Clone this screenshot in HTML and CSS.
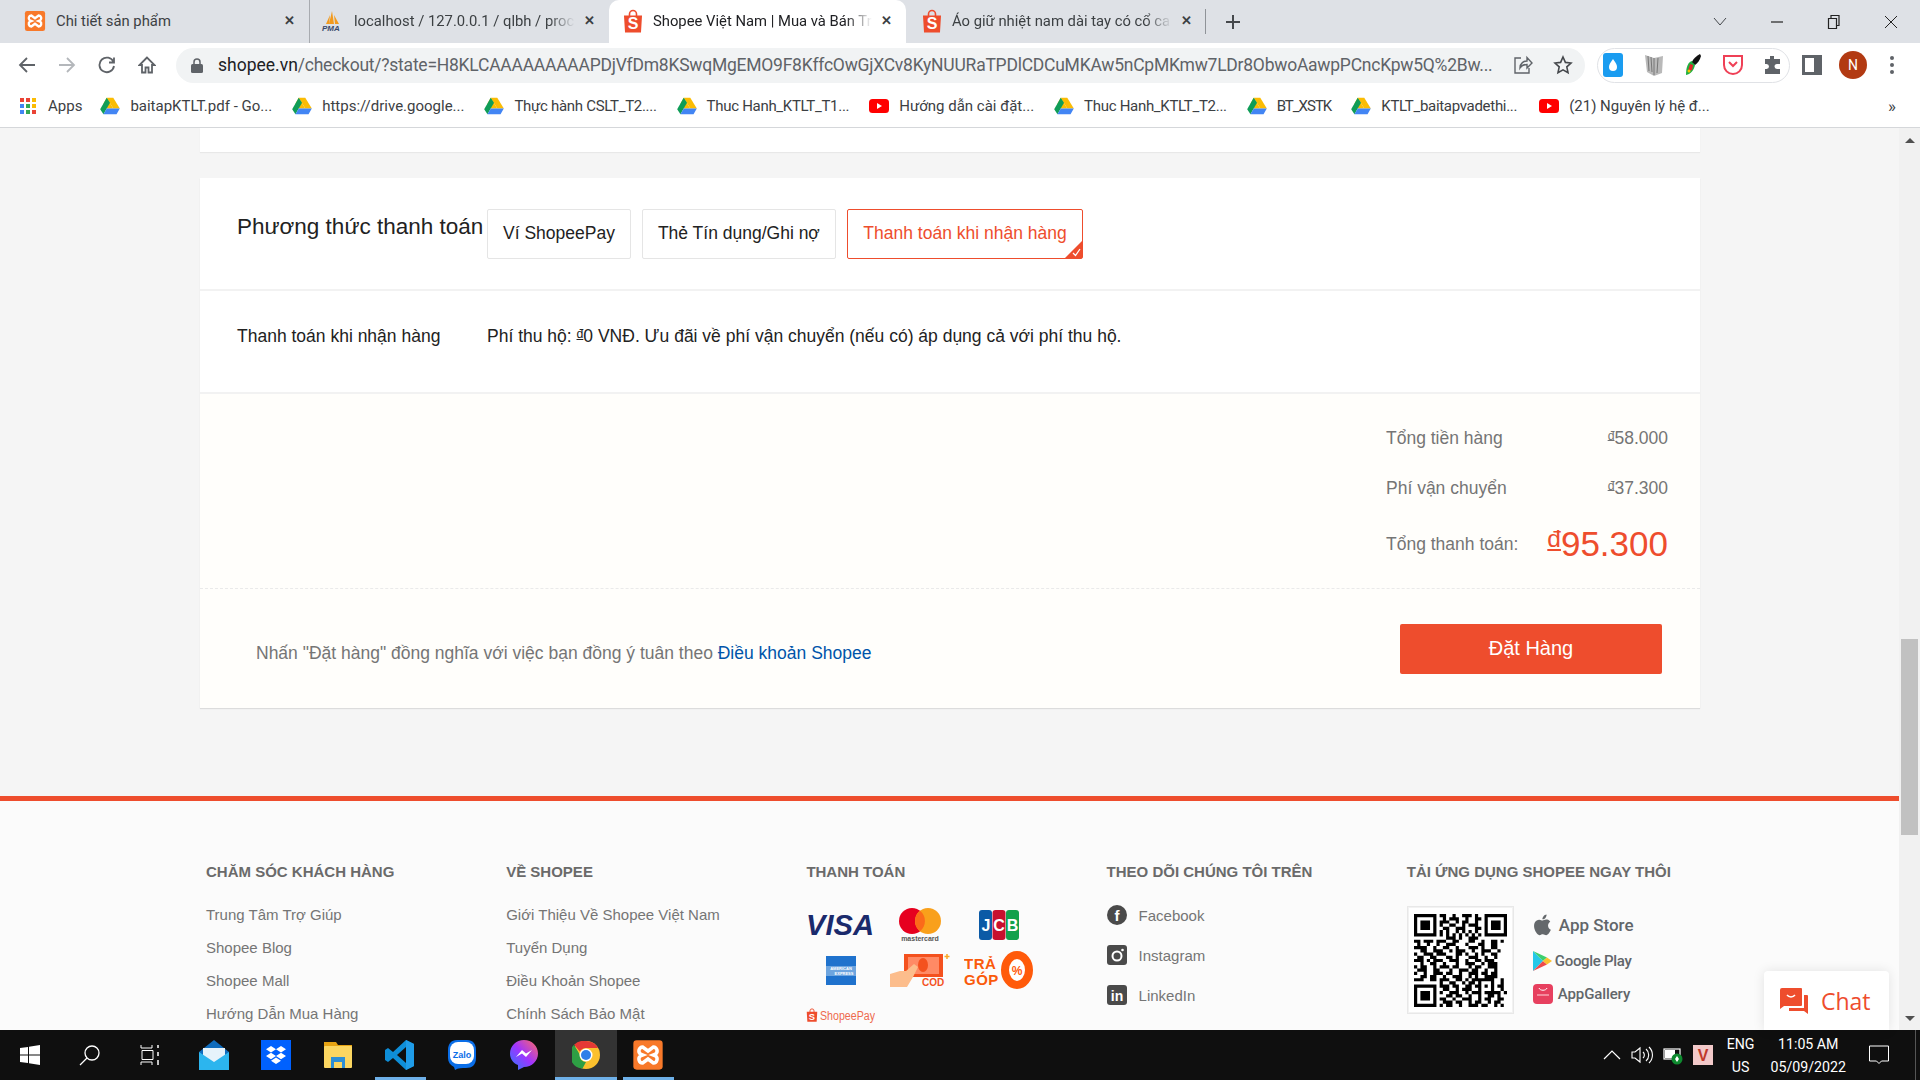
FILE: index.html
```html
<!DOCTYPE html>
<html lang="vi">
<head>
    <meta charset="UTF-8">
    <title>Shopee Việt Nam | Mua và Bán Trên Ứng Dụng</title>
    <link rel="stylesheet" href="styles.css">
</head>
<body>
    <!-- Shared icons -->
    <svg class="defs" width="0" height="0">
        <symbol id="i-drive" viewBox="0 0 24 22">
            <path d="M8 1h8l8 13h-8z" fill="#fbbc04"/>
            <path d="M8 1l8 13H8.2L4 7.8z" fill="#fbbc04"/>
            <path d="M8 1L0 15l4 6 8-14z" fill="#0f9d58"/>
            <path d="M4 21l4-7h16l-4 7z" fill="#4285f4"/>
        </symbol>
        <symbol id="i-yt" viewBox="0 0 20 14">
            <rect width="20" height="14" rx="3.5" fill="#f00"/>
            <path d="M8 4l5 3-5 3z" fill="#fff"/>
        </symbol>
        <symbol id="i-bag" viewBox="0 0 20 24">
            <path d="M6.5 7V5a3.5 3.5 0 0 1 7 0v2" fill="none" stroke="#ee4d2d" stroke-width="1.6"/>
            <path d="M1 6.5h18l-1 17H2z" fill="#ee4d2d"/>
            <text x="10" y="20" text-anchor="middle" class="bag-s">S</text>
        </symbol>
        <symbol id="i-xampp" viewBox="0 0 24 24">
            <rect x="1" y="1" width="22" height="22" rx="2.5" fill="#f8792a"/>
            <path d="M8 6a3 3 0 0 0-1.6 5.4L8 12l-1.6.6A3 3 0 0 0 8 18l4-3 4 3a3 3 0 0 0 1.6-5.4L16 12l1.600-.6A3 3 0 0 0 16 6l-4 3z" fill="none" stroke="#fff" stroke-width="2.6"/>
        </symbol>
    </svg>

    <!-- Tab strip -->
    <div class="tabstrip">
        <div class="tab tab-first">
            <svg class="fav" width="22" height="22"><use href="#i-xampp"/></svg>
            <span class="tab-title">Chi tiết sản phẩm</span>
            <span class="tab-x">✕</span>
        </div>
        <div class="tab tab-sep">
            <svg class="fav" width="24" height="22" viewBox="0 0 24 22">
                <path d="M9 14L12 1l2 13zM6 14L10 5l-1 9zM15 14l-1-9 5 9z" fill="#f29a1e"/>
                <text x="2" y="21" class="pma">PMA</text>
            </svg>
            <span class="tab-title">localhost / 127.0.0.1 / qlbh / proc</span>
            <span class="tab-x">✕</span>
        </div>
        <div class="tab tab-active">
            <svg class="fav" width="20" height="24"><use href="#i-bag"/></svg>
            <span class="tab-title">Shopee Việt Nam | Mua và Bán Tr</span>
            <span class="tab-x">✕</span>
        </div>
        <div class="tab tab-sep-right">
            <svg class="fav" width="20" height="24"><use href="#i-bag"/></svg>
            <span class="tab-title">Áo giữ nhiệt nam dài tay có cổ ca</span>
            <span class="tab-x">✕</span>
        </div>
        <svg class="tab-plus" width="16" height="16" viewBox="0 0 16 16"><path d="M8 1v14M1 8h14" stroke="#45484c" stroke-width="2"/></svg>
        <div class="win-controls">
            <svg width="14" height="10" viewBox="0 0 14 10"><path d="M1 1l6 7 6-7" fill="none" stroke="#45484c"/></svg>
            <svg width="14" height="14" viewBox="0 0 14 14"><path d="M1 7h12" stroke="#222" stroke-width="1.2"/></svg>
            <svg width="14" height="16" viewBox="0 0 14 16"><path d="M1.5 4.5h8v10h-8zM4 4.500V1.500h8v10H9.500" fill="none" stroke="#222" stroke-width="1.2"/></svg>
            <svg width="14" height="14" viewBox="0 0 14 14"><path d="M1 1l12 12M13 1L1 13" stroke="#222"/></svg>
        </div>
    </div>

    <!-- Address bar -->
    <div class="toolbar">
        <div class="nav-btns">
            <svg width="18" height="18" viewBox="0 0 18 18"><path d="M17 9H2M9 2L2 9l7 7" fill="none" stroke="#5f6368" stroke-width="1.800"/></svg>
            <svg width="18" height="18" viewBox="0 0 18 18"><path d="M1 9h15M9 2l7 7-7 7" fill="none" stroke="#b4b7bb" stroke-width="1.800"/></svg>
            <svg width="18" height="18" viewBox="0 0 18 18"><path d="M15.500 6A7.300 7.300 0 1 0 16 10M16 1.500V6.500H11" fill="none" stroke="#5f6368" stroke-width="1.800"/></svg>
            <svg width="18" height="18" viewBox="0 0 18 18"><path d="M9 1.500L1.500 9H4v7.500h3.500v-5h3v5H14V9h2.500z" fill="none" stroke="#5f6368" stroke-width="1.800"/></svg>
        </div>
        <div class="omnibox">
            <svg class="lock" width="12" height="15" viewBox="0 0 12 15"><path d="M3 6V4a3 3 0 0 1 6 0v2" fill="none" stroke="#5f6368" stroke-width="1.500"/><rect y="6" width="12" height="9" rx="1.500" fill="#5f6368"/></svg>
            <span class="url"><b>shopee.vn</b>/checkout/?state=H8KLCAAAAAAAAAPDjVfDm8KSwqMgEMO9F8KffcOwGjXCv8KyNUURaTPDlCDCuMKAw5nCpMKmw7LDr8ObwoAawpPCncKpw5Q%2Bw...</span>
            <svg width="20" height="20" viewBox="0 0 20 20"><path d="M8 3H2v15h14v-5M7 13c0-5 4-7 7-7V2.500L19 8l-5 5V9.500c-3 0-5.500 1-7 3.500z" fill="none" stroke="#5f6368" stroke-width="1.400"/></svg>
            <svg width="20" height="20" viewBox="0 0 20 20"><path d="M10 2l2.400 5.400 5.600.6-4.200 3.900 1.200 5.800L10 14.800 5 17.700l1.200-5.800L2 8l5.600-.6z" fill="none" stroke="#45484c" stroke-width="1.600"/></svg>
        </div>
        <div class="ext-pill">
            <svg width="20" height="24" viewBox="0 0 20 24"><rect width="20" height="24" rx="3" fill="#1a9cf0"/><path d="M10 6c3 4 4 6 4 8a4 4 0 0 1-8 0c0-2 1-4 4-8z" fill="#fff"/></svg>
            <svg width="22" height="24" viewBox="0 0 22 24"><path d="M2 2l9 3 9-2-1 17-8 3-7-4z" fill="#b9b9b9"/><path d="M5 3l1 15M8 4l1 15M11 5v17M15 5l-1 15" stroke="#777"/></svg>
            <svg width="18" height="24" viewBox="0 0 18 24"><path d="M2 22c0-8 2-13 6-14l3 4c-1 5-4 9-9 10z" fill="#1fb141"/><path d="M8 9c1-3 4-6 8-8l1 2c-1 4-3 7-6 9z" fill="#111"/><path d="M6 11l3 1-1 5-4 1z" fill="#e6232a"/><circle cx="5" cy="18" r="1.500" fill="#f2c200"/></svg>
            <svg width="22" height="24" viewBox="0 0 22 24"><path d="M2 3h18v9a9 9 0 0 1-18 0z" fill="none" stroke="#ef4056" stroke-width="2"/><path d="M7 9l4 4 4-4" fill="none" stroke="#ef4056" stroke-width="2"/></svg>
            <svg width="20" height="20" viewBox="0 0 20 20"><path d="M7 1h4v3h6v5h-3a2.500 2.500 0 0 0 0 5h3v5H2v-5h1.500a2.500 2.500 0 0 0 0-5H2V4h5z" fill="#5f6368"/></svg>
        </div>
        <svg class="side-panel" width="20" height="20" viewBox="0 0 20 20"><rect x="1.500" y="1.500" width="17" height="17" fill="none" stroke="#5f6368" stroke-width="3"/><rect x="12" y="2" width="6" height="16" fill="#5f6368"/></svg>
        <span class="avatar">N</span>
        <svg class="dots" width="4" height="18" viewBox="0 0 4 18"><circle cx="2" cy="2" r="2" fill="#5f6368"/><circle cx="2" cy="9" r="2" fill="#5f6368"/><circle cx="2" cy="16" r="2" fill="#5f6368"/></svg>
    </div>

    <!-- Bookmarks -->
    <div class="bookmarks">
        <a class="bm bm-apps">
            <svg width="16" height="16" viewBox="0 0 16 16">
                <rect width="4" height="4" fill="#ea4335"/><rect x="6" width="4" height="4" fill="#ea4335"/><rect x="12" width="4" height="4" fill="#fbbc04"/>
                <rect y="6" width="4" height="4" fill="#4285f4"/><rect x="6" y="6" width="4" height="4" fill="#34a853"/><rect x="12" y="6" width="4" height="4" fill="#fbbc04"/>
                <rect y="12" width="4" height="4" fill="#4285f4"/><rect x="6" y="12" width="4" height="4" fill="#34a853"/><rect x="12" y="12" width="4" height="4" fill="#ea4335"/>
            </svg>Apps
        </a>
        <a class="bm"><svg width="20" height="18"><use href="#i-drive"/></svg>baitapKTLT.pdf - Go...</a>
        <a class="bm"><svg width="20" height="18"><use href="#i-drive"/></svg>https://drive.google...</a>
        <a class="bm bm-tight"><svg width="20" height="18"><use href="#i-drive"/></svg>Thực hành CSLT_T2....</a>
        <a class="bm bm-tight"><svg width="20" height="18"><use href="#i-drive"/></svg>Thuc Hanh_KTLT_T1...</a>
        <a class="bm"><svg width="20" height="14"><use href="#i-yt"/></svg>Hướng dẫn cài đặt...</a>
        <a class="bm bm-tight"><svg width="20" height="18"><use href="#i-drive"/></svg>Thuc Hanh_KTLT_T2...</a>
        <a class="bm bm-xstk"><svg width="20" height="18"><use href="#i-drive"/></svg>BT_XSTK</a>
        <a class="bm bm-tight bm-ktlt"><svg width="20" height="18"><use href="#i-drive"/></svg>KTLT_baitapvadethi...</a>
        <a class="bm"><svg width="20" height="14"><use href="#i-yt"/></svg>(21) Nguyên lý hệ đ...</a>
        <span class="bm-more">»</span>
    </div>

    <!-- Page -->
    <div class="viewport">
        <div class="page">
            <div class="card-stub"></div>

            <section class="checkout">
                <div class="pay-head">
                    <h2>Phương thức thanh toán</h2>
                    <div class="pay-options">
                        <button class="pay-option">Ví ShopeePay</button>
                        <button class="pay-option">Thẻ Tín dụng/Ghi nợ</button>
                        <button class="pay-option selected">Thanh toán khi nhận hàng
                            <svg class="tick" width="17" height="17" viewBox="0 0 17 17"><path d="M17 0v17H0z" fill="#ee4d2d"/><path d="M8 12l2.500 2.500L15 8" fill="none" stroke="#fff" stroke-width="1.300"/></svg>
                        </button>
                    </div>
                </div>
                <div class="pay-note">
                    <span class="pay-note-label">Thanh toán khi nhận hàng</span>
                    <span>Phí thu hộ: <span class="cur">đ</span>0 VNĐ. Ưu đãi về phí vận chuyển (nếu có) áp dụng cả với phí thu hộ.</span>
                </div>
                <div class="totals">
                    <div class="totals-grid">
                        <span>Tổng tiền hàng</span><span class="amount"><span class="cur">đ</span>58.000</span>
                        <span>Phí vận chuyển</span><span class="amount"><span class="cur">đ</span>37.300</span>
                        <span>Tổng thanh toán:</span><span class="amount grand"><span class="cur">đ</span>95.300</span>
                    </div>
                </div>
                <div class="place-order">
                    <p>Nhấn "Đặt hàng" đồng nghĩa với việc bạn đồng ý tuân theo <a>Điều khoản Shopee</a></p>
                    <button class="order-btn">Đặt Hàng</button>
                </div>
            </section>

            <footer class="site-footer">
                <div class="footer-col">
                    <h3>Chăm sóc khách hàng</h3>
                    <ul class="links">
                        <li>Trung Tâm Trợ Giúp</li>
                        <li>Shopee Blog</li>
                        <li>Shopee Mall</li>
                        <li>Hướng Dẫn Mua Hàng</li>
                    </ul>
                </div>
                <div class="footer-col">
                    <h3>Về Shopee</h3>
                    <ul class="links">
                        <li>Giới Thiệu Về Shopee Việt Nam</li>
                        <li>Tuyển Dụng</li>
                        <li>Điều Khoản Shopee</li>
                        <li>Chính Sách Bảo Mật</li>
                    </ul>
                </div>
                <div class="footer-col">
                    <h3>Thanh toán</h3>
                    <div class="pay-logos">
                        <svg width="69" height="24" viewBox="0 0 69 24"><text x="0" y="22" textLength="68" lengthAdjust="spacingAndGlyphs" class="visa">VISA</text></svg>
                        <svg width="44" height="34" viewBox="0 0 44 34">
                            <circle cx="14" cy="13" r="13" fill="#e6001f"/><circle cx="30" cy="13" r="13" fill="#f9a01b"/>
                            <path d="M22 2.800a13 13 0 0 1 0 20.400 13 13 0 0 1 0-20.400z" fill="#fb6a1a"/>
                            <text x="22" y="33" text-anchor="middle" class="mc">mastercard</text>
                        </svg>
                        <svg width="40" height="30" viewBox="0 0 40 30">
                            <rect width="13" height="30" rx="3" fill="#0b5aa6"/><rect x="13.500" width="13" height="30" rx="3" fill="#c8102e"/><rect x="27" width="13" height="30" rx="3" fill="#12a14b"/>
                            <text x="7" y="21" text-anchor="middle" class="jcb">J</text><text x="20" y="21" text-anchor="middle" class="jcb">C</text><text x="33.500" y="21" text-anchor="middle" class="jcb">B</text>
                        </svg>
                        <svg width="30" height="29" viewBox="0 0 30 29">
                            <rect width="30" height="29" fill="#1f72cd"/>
                            <rect x="0" y="10" width="30" height="10" fill="#6ea5df"/>
                            <text x="15" y="14" text-anchor="middle" class="amex">AMERICAN</text><text x="18" y="19" text-anchor="middle" class="amex">EXPRESS</text>
                        </svg>
                        <svg width="60" height="33" viewBox="0 0 60 33">
                            <rect x="14" width="39" height="23" fill="#f4511e"/>
                            <rect x="18" y="3" width="31" height="17" fill="#ff8a65"/>
                            <ellipse cx="33" cy="11" rx="5" ry="7" fill="#f4511e"/>
                            <path d="M0 20l10-3h6l8-7 4 3-5 10-6 10H0z" fill="#fcbd8c"/>
                            <text x="32" y="32" class="cod">COD</text>
                            <path d="M57 0v5M54.500 2.500h5" stroke="#f9a825" stroke-width="1.500"/>
                        </svg>
                        <svg width="70" height="38" viewBox="0 0 70 38">
                            <text x="0" y="18" class="tra">TRẢ</text><text x="0" y="34" class="tra">GÓP</text>
                            <ellipse cx="53" cy="19" rx="12" ry="15" fill="#fff" stroke="#ff5a0a" stroke-width="8"/>
                            <text x="53" y="24" text-anchor="middle" class="pct">%</text>
                        </svg>
                        <svg width="69" height="15" viewBox="0 0 69 15">
                            <use href="#i-bag" width="12" height="14"/>
                            <text x="14" y="12" textLength="55" lengthAdjust="spacingAndGlyphs" class="spay">ShopeePay</text>
                        </svg>
                    </div>
                </div>
                <div class="footer-col">
                    <h3>Theo dõi chúng tôi trên</h3>
                    <ul class="socials">
                        <li>
                            <svg width="20" height="20" viewBox="0 0 20 20"><circle cx="10" cy="10" r="10" fill="#4a4a4a"/><text x="10" y="16" text-anchor="middle" class="soc-f">f</text></svg>
                            Facebook
                        </li>
                        <li>
                            <svg width="20" height="20" viewBox="0 0 20 20"><rect width="20" height="20" rx="3" fill="#4a4a4a"/><circle cx="10" cy="11" r="4.500" fill="none" stroke="#fff" stroke-width="2"/><circle cx="15.500" cy="5" r="1.300" fill="#fff"/></svg>
                            Instagram
                        </li>
                        <li>
                            <svg width="20" height="20" viewBox="0 0 20 20"><rect width="20" height="20" rx="3" fill="#4a4a4a"/><text x="10" y="16" text-anchor="middle" class="soc-in">in</text></svg>
                            LinkedIn
                        </li>
                    </ul>
                </div>
                <div class="footer-col">
                    <h3>Tải ứng dụng Shopee ngay thôi</h3>
                    <div class="app-row">
                        <div class="qr">
                            <svg width="93" height="93" viewBox="0 0 29 29">
                                <path fill-rule="evenodd" d="M0 0h7v7H0zM1 1v5h5V1zM2 2h3v3H2zM22 0h7v7h-7zM23 1v5h5V1zM24 2h3v3h-3zM0 22h7v7H0zM1 23v5h5v-5zM2 24h3v3H2z"/>
                                <path stroke="#000" fill="none" d="M8 .5h2m2 0h1m2 0h3m1 0h1M9 1.500h1m1 0h3m2 0h1m2 0h2M8 2.500h3m2 0h1m1 0h2m2 0h1M8 3.500h1m2 0h2m2 0h1m1 0h3M9 4.500h2m2 0h3m3 0h2M8 5.500h1m1 0h1m2 0h1m1 0h1m1 0h1m1 0h1M8 6.500h1m1 0h1m1 0h1m1 0h1m1 0h1m1 0h1m1 0h1M10 7.500h3m1 0h1m2 0h3M0 8.500h2m1 0h3m1 0h3m2 0h2m3 0h2m2 0h1m2 0h2m1 0h1M1 9.500h1m2 0h1m2 0h1m2 0h3m3 0h1m3 0h2m2 0h2M0 10.500h4m2 0h1m2 0h2m2 0h1m3 0h3m1 0h1m2 0h2M2 11.500h2m2 0h3m2 0h1m1 0h3m2 0h1m2 0h3m2 0h1M0 12.500h1m2 0h3m1 0h3m3 0h2m1 0h1m2 0h1m1 0h1m2 0h2M1 13.500h2m2 0h2m3 0h2m1 0h1m3 0h3m2 0h1m2 0h1M0 14.500h3m1 0h1m1 0h3m2 0h3m2 0h1m2 0h2m1 0h3M2 15.500h1m2 0h2m2 0h1m3 0h1m2 0h3m2 0h1m1 0h3M0 16.500h1m1 0h2m2 0h1m1 0h3m1 0h2m3 0h1m1 0h2m2 0h3M1 17.500h3m2 0h2m3 0h1m2 0h3m1 0h2m2 0h1m2 0h1M0 18.500h1m2 0h1m2 0h3m1 0h2m2 0h1m2 0h3m1 0h2m1 0h2M2 19.500h2m1 0h2m2 0h1m2 0h3m2 0h1m1 0h1m2 0h4M0 20.500h3m2 0h2m1 0h3m2 0h2m1 0h1m1 0h7m2 0h1M8 21.500h1m2 0h2m2 0h1m1 0h2m1 0h1m3 0h1m2 0h1M8 22.500h3m1 0h2m2 0h2m1 0h2m1 0h1m1 0h1m1 0h2M9 23.500h2m2 0h1m1 0h3m2 0h1m3 0h1m2 0h1M8 24.500h1m2 0h3m2 0h1m1 0h3m1 0h5m1 0h1M10 25.500h2m1 0h2m2 0h1m2 0h1m2 0h2m1 0h1M8 26.500h2m2 0h1m2 0h3m2 0h1m1 0h2m2 0h2M9 27.500h3m1 0h2m2 0h1m1 0h2m2 0h1m1 0h2M8 28.500h1m1 0h2m2 0h1m2 0h3m1 0h2m2 0h1m1 0h1"/>
                            </svg>
                        </div>
                        <div class="stores">
                            <div class="store store-apple">
                                <svg width="20" height="25" viewBox="2 1 20 23"><path fill="#64686b" d="M17.050 12.540c-.03-2.600 2.120-3.850 2.220-3.910-1.210-1.770-3.090-2.010-3.760-2.040-1.600-.16-3.120.94-3.930.94-.81 0-2.060-.92-3.390-.89-1.740.03-3.350 1.010-4.250 2.570-1.810 3.150-.46 7.810 1.300 10.360.86 1.250 1.890 2.650 3.240 2.600 1.300-.05 1.790-.84 3.360-.84 1.570 0 2.010.84 3.390.81 1.400-.02 2.280-1.270 3.140-2.530.99-1.450 1.400-2.850 1.420-2.930-.03-.01-2.720-1.040-2.740-4.140zM14.470 4.900c.72-.87 1.200-2.080 1.070-3.280-1.030.04-2.280.69-3.020 1.550-.66.77-1.240 2-1.090 3.180 1.150.09 2.330-.58 3.040-1.450z"/></svg>
                                <span>App Store</span>
                            </div>
                            <div class="store store-gplay">
                                <svg width="19" height="20" viewBox="0 0 19 20"><path d="M0 0l10 10L0 20z" fill="#25c8e8"/><path d="M0 0l14 6.500-4 3.500z" fill="#3ccf6e"/><path d="M0 20l14-6.500-4-3.500z" fill="#ef4a4a"/><path d="M14 6.500l5 3.500-5 3.500-4-3.500z" fill="#fbc02d"/></svg>
                                <span>Google Play</span>
                            </div>
                            <div class="store store-gallery">
                                <svg width="20" height="20" viewBox="0 0 20 20"><rect width="20" height="20" rx="4" fill="#e7405f"/><path d="M6 4c1 3 7 3 8 0" fill="none" stroke="#fff"/><path d="M4 11h12" stroke="#ffd5dc"/></svg>
                                <span>AppGallery</span>
                            </div>
                        </div>
                    </div>
                </div>
            </footer>
        </div>

        <div class="scrollbar">
            <span class="arrow up"></span>
            <span class="thumb"></span>
            <span class="arrow down"></span>
        </div>

        <div class="chat-widget">
            <svg width="28" height="26" viewBox="0 0 28 26">
                <path d="M2 0h19a1 1 0 0 1 1 1v16a1 1 0 0 1-1 1H4l-4 3V2a2 2 0 0 1 2-2z" fill="#ee4d2d"/>
                <path d="M7 7c2 2.500 6 2.500 8 0" fill="none" stroke="#fff" stroke-width="1.500"/>
                <path d="M24 7h3a1 1 0 0 1 1 1v18l-4-3H9v-3h15z" fill="#ee4d2d"/>
            </svg>
            <span>Chat</span>
        </div>
    </div>

    <!-- Taskbar -->
    <div class="taskbar">
        <div class="task-cell cell-sys">
            <svg width="20" height="20" viewBox="0 0 20 20"><path d="M0 3l8-1v7.500H0zM9 1.800L20 0v9.500H9zM0 10.500h8V18l-8-1zM9 10.500h11V20l-11-1.800z" fill="#fff"/></svg>
        </div>
        <div class="task-cell cell-sys">
            <svg width="22" height="22" viewBox="0 0 22 22"><circle cx="13" cy="9" r="7" fill="none" stroke="#fff" stroke-width="1.300"/><path d="M8 14l-7 7" stroke="#fff" stroke-width="1.300"/></svg>
        </div>
        <div class="task-cell cell-sys">
            <svg width="20" height="20" viewBox="0 0 20 20"><path d="M1 0v3h11V0M2 5.500h11v9H2zM1 20v-3h11v3" fill="none" stroke="#fff"/><path d="M18 0v3M18 7v4M18 15v5" stroke="#fff" stroke-width="1.500"/></svg>
        </div>
        <div class="task-cell">
            <svg width="30" height="30" viewBox="0 0 30 30"><path d="M15 0l15 12v18H0V12z" fill="#0f6cbd"/><path d="M4 8h22v10l-11 7L4 18z" fill="#e6f3fb"/><path d="M0 12l15 10 15-10v18H0z" fill="#2cb5ee"/></svg>
        </div>
        <div class="task-cell">
            <svg width="30" height="30" viewBox="0 0 30 30"><rect width="30" height="30" fill="#0061fe"/><path d="M10 6l5 3.200-5 3.200-5-3.200zM20 6l5 3.200-5 3.200-5-3.200zM10 12.800l5 3.200-5 3.200-5-3.200zM20 12.800l5 3.200-5 3.200-5-3.200zM15 17.500l5 3.200-5 3.200-5-3.200z" fill="#fff"/></svg>
        </div>
        <div class="task-cell">
            <svg width="28" height="28" viewBox="0 0 28 28"><path d="M0 1h12l2 3h14v22H0z" fill="#e6a313"/><rect y="5" width="28" height="22" rx="1" fill="#fbd661"/><path d="M7 27v-11h14v11h-3v-6h-8v6z" fill="#2d8fd5"/></svg>
        </div>
        <div class="task-cell cell-open">
            <svg width="30" height="30" viewBox="0 0 30 30"><path d="M21 0l8 4v22l-8 4L8 18l-5 4-3-2V10l3-2 5 4z" fill="#0e8ed8"/><path d="M21 7l-9 8 9 8z" fill="#0f0f0f"/><path d="M21 0l8 4v22l-8 4z" fill="#1f9ce8"/></svg>
        </div>
        <div class="task-cell">
            <svg width="30" height="30" viewBox="0 0 30 30"><path d="M10 0h10c6 0 9 4 9 10v8c0 7-4 10-10 10-4 0-8 0-11 2l-1-3c-4-2-6-5-6-9v-8C1 4 4 0 10 0z" fill="#0a6ee8"/><rect x="3" y="2" width="24" height="22" rx="8" fill="#fff"/><text x="15" y="18" text-anchor="middle" class="zalo">Zalo</text></svg>
        </div>
        <div class="task-cell">
            <svg width="28" height="30" viewBox="0 0 28 30"><defs><linearGradient id="msg" x1="0" y1="1" x2="1" y2="0"><stop offset="0" stop-color="#2a7bff"/><stop offset=".5" stop-color="#a033ff"/><stop offset="1" stop-color="#ff6c64"/></linearGradient></defs><path d="M14 0c8 0 14 6 14 13.500S22 27 14 27l-6 3v-5C3 23 0 19 0 13.500 0 6 6 0 14 0z" fill="url(#msg)"/><path d="M6 17l6-7 4 3.500L22 10l-6 7-4-3.500z" fill="#fff"/></svg>
        </div>
        <div class="task-cell cell-chrome">
            <svg width="28" height="28" viewBox="0 0 28 28"><circle cx="14" cy="14" r="14" fill="#fbc02d"/><path d="M14 0a14 14 0 0 1 12.100 7H14a7 7 0 0 0-6.100 3.500L2 3.800A14 14 0 0 1 14 0z" fill="#e53935"/><path d="M2 3.800l6 10.200a6 6 0 0 0 6 7l-3.500 6.600A14 14 0 0 1 2 3.800z" fill="#2e9f44"/><circle cx="14" cy="14" r="6.500" fill="#fff"/><circle cx="14" cy="14" r="5" fill="#2f7fe8"/></svg>
        </div>
        <div class="task-cell cell-open">
            <svg width="32" height="32"><use href="#i-xampp"/></svg>
        </div>

        <div class="tray">
            <svg width="18" height="10" viewBox="0 0 18 10"><path d="M1 9l8-8 8 8" fill="none" stroke="#fff" stroke-width="1.200"/></svg>
            <svg width="22" height="18" viewBox="0 0 22 18"><path d="M1 6h3l5-4v14l-5-4H1zM12 6a4 4 0 0 1 0 6M15 3a8 8 0 0 1 0 12M18 1a11 11 0 0 1 0 16" fill="none" stroke="#fff" stroke-width="1.100"/></svg>
            <svg width="20" height="20" viewBox="0 0 20 20"><rect x="1" y="4" width="16" height="10" fill="none" stroke="#fff" stroke-width="1.200"/><rect x="2" y="5" width="10" height="8" fill="#fff"/><circle cx="14" cy="14" r="5.500" fill="#0e8a2f"/><path d="M14 11l2 3-2 3-2-3z" fill="#fff"/></svg>
            <svg width="20" height="20" viewBox="0 0 20 20"><rect width="20" height="20" fill="#f2c9c9"/><text x="10" y="16" text-anchor="middle" class="vk">V</text></svg>
            <div class="lang"><span>ENG</span><span>US</span></div>
            <div class="clock"><span>11:05 AM</span><span>05/09/2022</span></div>
            <svg class="notify" width="20" height="20" viewBox="0 0 20 20"><path d="M.5 1h19v15h-7L10 18.500 7.500 16h-7z" fill="none" stroke="#fff"/></svg>
            <span class="show-desktop"></span>
        </div>
    </div>
</body>
</html>
```

FILE: styles.css
```css
/* General */
* {
    box-sizing: border-box;
}

html, body {
    margin: 0;
    height: 1080px;
    overflow: hidden;
}

body {
    display: flex;
    flex-direction: column;
    font-family: "Liberation Sans", Arial, sans-serif;
    background: #f5f5f5;
    color: #222;
}

.defs {
    position: absolute;
}

/* Tab strip */
.tabstrip {
    display: flex;
    align-items: center;
    height: 43px;
    padding-left: 10px;
    background: #dee1e6;
    font-family: Roboto, sans-serif;
    font-size: 14.800px;
    color: #3c4043;
}

.tab {
    display: flex;
    align-items: center;
    width: 299px;
    height: 43px;
    padding: 0 12px 2px 14px;
    position: relative;
}

.tab-sep {
    border-left: 1px solid #a8abb0;
    width: 300px;
    padding-left: 10px;
}

.tab-active {
    width: 297px;
    background: #fff;
    border-radius: 10px 10px 0 0;
    color: #202124;
    padding-left: 14px;
}

.tab-sep-right {
    width: 300px;
    padding-left: 16px;
}

.tab-sep-right::after {
    content: "";
    position: absolute;
    right: 0;
    top: 9px;
    height: 25px;
    border-right: 1px solid #8f9398;
}

.fav {
    flex: none;
    margin-right: 10px;
}

.tab-title {
    flex: 1;
    overflow: hidden;
    white-space: nowrap;
    -webkit-mask-image: linear-gradient(to right, #000 88%, transparent);
    mask-image: linear-gradient(to right, #000 88%, transparent);
}

.tab-first .tab-title {
    -webkit-mask-image: none;
    mask-image: none;
}

.tab-x {
    flex: none;
    width: 16px;
    margin-left: 6px;
    text-align: center;
    font-size: 13px;
    font-weight: 700;
    color: #3c4043;
}

.tab-plus {
    margin-left: 19px;
}

.win-controls {
    display: flex;
    align-items: center;
    gap: 43px;
    margin-left: auto;
    padding-right: 22px;
}

.bag-s {
    font: 700 16px "Liberation Sans", sans-serif;
    fill: #fff;
}

.pma {
    font: italic 700 8px "Liberation Sans", sans-serif;
    fill: #3a4a6b;
}

/* Toolbar */
.toolbar {
    display: flex;
    align-items: center;
    height: 43px;
    padding-top: 1px;
    background: #fff;
}

.nav-btns {
    display: flex;
    align-items: center;
    gap: 22px;
    padding-left: 18px;
    width: 176px;
}

.omnibox {
    display: flex;
    align-items: center;
    width: 1409px;
    height: 35px;
    padding: 0 12px 0 15px;
    gap: 20px;
    background: #f1f3f4;
    border-radius: 18px;
}

.lock {
    flex: none;
    margin-right: -5px;
}

.url {
    flex: 1;
    overflow: hidden;
    white-space: nowrap;
    font-family: Roboto, sans-serif;
    font-size: 17.500px;
    letter-spacing: -0.24px;
    color: #5f6368;
}

.url b {
    font-weight: 400;
    letter-spacing: 0;
    color: #202124;
}

.ext-pill {
    display: flex;
    align-items: center;
    justify-content: space-between;
    width: 193px;
    height: 35px;
    margin-left: 12px;
    padding: 0 6px 0 5px;
    border: 1px solid #e0e2e6;
    border-radius: 18px;
}

.side-panel {
    margin-left: 12px;
}

.avatar {
    display: flex;
    align-items: center;
    justify-content: center;
    width: 28px;
    height: 28px;
    margin-left: 17px;
    border-radius: 50%;
    background: #b23a12;
    color: #fff;
    font-family: Roboto, sans-serif;
    font-size: 14px;
}

.dots {
    margin-left: 23px;
}

/* Bookmarks */
.bookmarks {
    display: flex;
    align-items: center;
    height: 42px;
    padding: 0 0 2px 20px;
    background: #fff;
    border-bottom: 1px solid #d5d7da;
    font-family: Roboto, sans-serif;
    font-size: 15px;
    color: #3c4043;
}

.bm {
    display: flex;
    align-items: center;
    gap: 10px;
    margin-right: 20px;
    white-space: nowrap;
}

.bm-apps {
    gap: 12px;
    margin-right: 18px;
}

.bm-tight {
    letter-spacing: -0.3px;
}

.bm-xstk {
    letter-spacing: -1px;
}

.bm-ktlt {
    margin-right: 22px;
}

.bm-more {
    margin-left: auto;
    padding-right: 24px;
    font-size: 17px;
}

/* Page */
.viewport {
    flex: 1;
    display: flex;
    position: relative;
    min-height: 0;
}

.page {
    flex: 1;
    min-width: 0;
    overflow: hidden;
}

.card-stub {
    width: 1500px;
    height: 24px;
    margin: 0 0 26px 200px;
    background: #fff;
    box-shadow: 0 1px 1px rgba(0, 0, 0, 0.05);
}

/* Checkout card */
.checkout {
    width: 1500px;
    margin-left: 200px;
    background: #fff;
    box-shadow: 0 1px 1px rgba(0, 0, 0, 0.1);
    font-size: 17.500px;
}

.pay-head {
    display: flex;
    align-items: flex-start;
    height: 113px;
    padding: 31px 0 0 37px;
    border-bottom: 2px solid #f2f2f2;
}

.pay-head h2 {
    width: 250px;
    margin: 0;
    font-size: 22.500px;
    font-weight: 400;
    line-height: 36px;
    white-space: nowrap;
    color: #222;
}

.pay-options {
    display: flex;
    gap: 11px;
}

.pay-option {
    position: relative;
    height: 50px;
    padding: 0 15px 2px;
    background: #fff;
    border: 1px solid #e5e5e5;
    border-radius: 2px;
    font: inherit;
    color: #222;
}

.pay-option.selected {
    padding: 0 15.500px 2px;
    border-color: #ee4d2d;
    color: #ee4d2d;
}

.tick {
    position: absolute;
    right: 0;
    bottom: 0;
}

.pay-note {
    display: flex;
    align-items: center;
    height: 103px;
    padding: 0 0 10px 37px;
    border-bottom: 2px solid #f2f2f2;
}

.pay-note-label {
    width: 250px;
}

.cur {
    font-size: 0.7em;
    text-decoration: underline;
    vertical-align: 0.35em;
    line-height: 0;
}

/* Totals */
.totals {
    padding: 19px 32px 13px 0;
    background: #fffefb;
    border-bottom: 1px dashed #eaeaea;
}

.totals-grid {
    display: grid;
    grid-template-columns: auto 1fr;
    grid-template-rows: 50px 50px 62px;
    align-items: center;
    width: 282px;
    margin-left: auto;
    color: #757575;
}

.amount {
    text-align: right;
}

.grand {
    font-size: 35px;
    color: #ee4d2d;
}

.place-order {
    display: flex;
    align-items: center;
    justify-content: space-between;
    height: 119px;
    padding: 0 38px 0 56px;
    background: #fffefb;
    color: #757575;
}

.place-order p {
    margin: 9px 0 0;
}

.place-order a {
    color: #05a;
}

.order-btn {
    width: 262px;
    height: 50px;
    background: #ee4d2d;
    border: none;
    border-radius: 2px;
    font: inherit;
    font-size: 20px;
    color: #fff;
}

/* Footer */
.site-footer {
    display: grid;
    grid-template-columns: repeat(5, 300.200px);
    margin-top: 88px;
    padding: 60px 0 0 206px;
    height: 240px;
    background: #fbfbfb;
    border-top: 5px solid #ee4d2d;
    font-size: 15px;
    color: #757575;
}

.footer-col h3 {
    height: 22px;
    margin: 0 0 23px;
    font-size: 15px;
    line-height: 22px;
    font-weight: 700;
    text-transform: uppercase;
    color: #6a6a6a;
}

.links,
.socials {
    margin: 0;
    padding: 0;
    list-style: none;
}

.links li {
    line-height: 18px;
    margin-bottom: 15px;
}

.socials {
    margin-top: -1px;
}

.socials li {
    display: flex;
    align-items: center;
    gap: 12px;
    height: 20px;
    margin-bottom: 20px;
}

.soc-f {
    font: 700 15px "Liberation Sans", sans-serif;
    fill: #fff;
}

.soc-in {
    font: 700 14px "Liberation Sans", sans-serif;
    fill: #fff;
}

/* Payment logos */
.pay-logos {
    display: grid;
    grid-template-columns: repeat(3, 69px);
    grid-auto-rows: 38px;
    gap: 7px 10px;
    align-items: center;
    justify-items: center;
}

.visa {
    font: italic 700 30px "Liberation Sans", sans-serif;
    fill: #1a2a6c;
}

.mc {
    font: 700 7px "Liberation Sans", sans-serif;
    fill: #555;
}

.jcb {
    font: 700 16px "Liberation Sans", sans-serif;
    fill: #fff;
}

.amex {
    font: 700 4px "Liberation Sans", sans-serif;
    fill: #fff;
}

.cod {
    font: 700 10px "Liberation Sans", sans-serif;
    fill: #f4511e;
}

.tra {
    font: 700 15px "Liberation Sans", sans-serif;
    letter-spacing: 0.5px;
    fill: #fa5a0a;
}

.pct {
    font: 700 12px "Liberation Sans", sans-serif;
    fill: #ff5a0a;
}

.spay {
    font: 400 12.500px "Liberation Sans", sans-serif;
    fill: #ee6a4d;
}

/* App download */
.app-row {
    display: flex;
    gap: 19px;
}

.qr {
    display: flex;
    align-items: center;
    justify-content: center;
    flex: none;
    width: 107px;
    height: 108px;
    background: #fff;
    border: 1px solid #e8e8e8;
    box-shadow: 0 0 0 1px #f2f2f2 inset;
}

.stores {
    display: flex;
    flex-direction: column;
    padding-top: 6px;
    font-family: Roboto, sans-serif;
    font-weight: 500;
    color: #62666a;
}

.store {
    display: flex;
    align-items: center;
    white-space: nowrap;
}

.store-apple {
    height: 26px;
    gap: 6px;
    font-size: 17px;
    margin-bottom: 13px;
}

.store-gplay {
    height: 20px;
    gap: 3px;
    font-size: 15px;
    letter-spacing: -0.3px;
    margin-bottom: 13px;
}

.store-gallery {
    height: 20px;
    gap: 5px;
    font-size: 15px;
    letter-spacing: -0.1px;
}

/* Scrollbar */
.scrollbar {
    flex: none;
    display: flex;
    flex-direction: column;
    align-items: center;
    width: 21px;
    background: #f1f1f1;
}

.arrow {
    width: 0;
    height: 0;
    border-left: 5px solid transparent;
    border-right: 5px solid transparent;
}

.arrow.up {
    margin-top: 10px;
    border-bottom: 5px solid #505050;
}

.arrow.down {
    margin-top: auto;
    margin-bottom: 9px;
    border-top: 5px solid #505050;
}

.thumb {
    width: 17px;
    height: 196px;
    margin-top: 496px;
    background: #c1c1c1;
}

/* Chat widget */
.chat-widget {
    position: absolute;
    right: 31px;
    bottom: 0;
    display: flex;
    align-items: center;
    gap: 13px;
    width: 125px;
    height: 59px;
    padding-left: 16px;
    background: #fff;
    border-radius: 4px 4px 0 0;
    box-shadow: 0 0 12px rgba(0, 0, 0, 0.1);
    font-family: "Open Sans", sans-serif;
    font-size: 23px;
    font-weight: 500;
    color: #ee4d2d;
}

/* Taskbar */
.taskbar {
    flex: none;
    display: flex;
    height: 50px;
    background: #0f0f0f;
    color: #fff;
    font-family: Roboto, sans-serif;
    font-size: 14.200px;
}

.task-cell {
    flex: none;
    display: flex;
    align-items: center;
    justify-content: center;
    width: 62px;
}

.cell-sys {
    width: 60px;
}

.cell-sys:nth-child(3) {
    margin-right: 3px;
}

.cell-chrome {
    background: #333;
    box-shadow: inset 0 -3px 0 #6eb0e8;
}

.cell-open {
    background: linear-gradient(#6eb0e8, #6eb0e8) center bottom / 51px 3px no-repeat;
}

.zalo {
    font: 700 9px "Liberation Sans", sans-serif;
    fill: #0a6ee8;
}

.vk {
    font: 700 16px "Liberation Sans", sans-serif;
    fill: #c0392b;
}

.tray {
    display: flex;
    align-items: center;
    gap: 10px;
    margin-left: auto;
}

.lang,
.clock {
    display: flex;
    flex-direction: column;
    align-items: center;
    gap: 3px;
    line-height: 20px;
}

.lang {
    margin-left: 4px;
}

.clock {
    margin-left: 6px;
}

.notify {
    margin-left: 13px;
}

.show-desktop {
    align-self: stretch;
    width: 5px;
    margin-left: 16px;
    border-left: 1px solid #555;
}
```
